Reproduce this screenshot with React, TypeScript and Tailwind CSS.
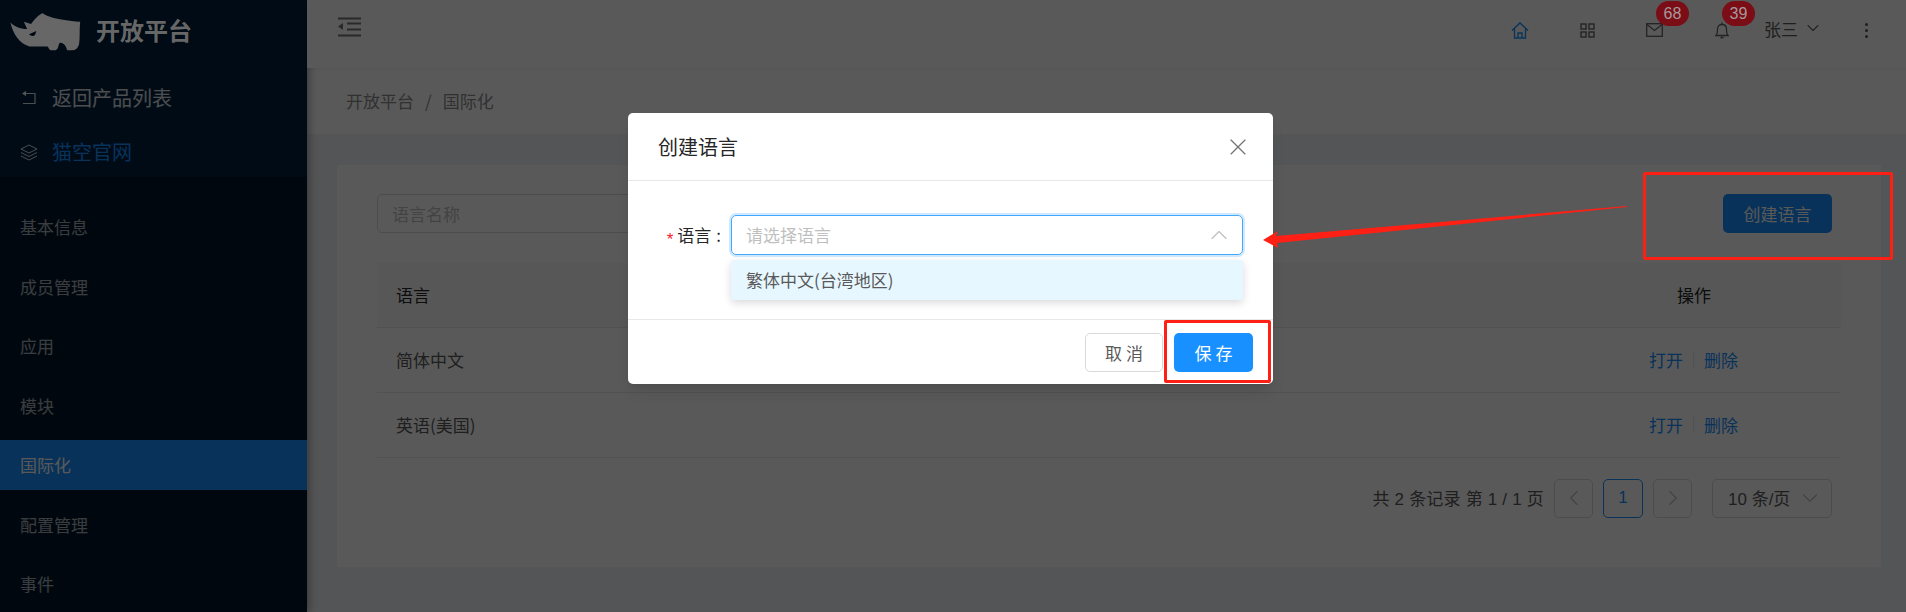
import { ChevronDown, ChevronLeft, ChevronRight, ChevronUp, X } from 'lucide-react'

const menuItems = ['基本信息', '成员管理', '应用', '模块', '国际化', '配置管理', '事件']

const rows = ['简体中文', '英语(美国)']

function RhinoLogo() {
  return (
    <svg width="74" height="40" viewBox="20 15 225 122" className="shrink-0">
      <path
        fill="currentColor"
        d="M27 50 C40 62 55 70 78 70 L68 48 L90 55 C100 40 115 25 125 22 C140 32 165 42 240 48 C237 70 240 100 236 118 C232 130 225 135 215 135 L200 135 C195 115 185 112 178 112 C172 118 175 130 165 135 L150 135 C143 132 145 126 140 123 L85 123 C55 115 35 85 27 50 Z"
      />
      <path fill="#00070e" d="M84 86 L106 76 L102 88 C96 93 90 92 84 86 Z" />
    </svg>
  )
}

function Sidebar() {
  return (
    <aside className="relative w-[307px] h-full shrink-0 bg-[#001529] shadow-[2px_0_8px_rgba(0,0,0,0.35)]">
      <div className="h-[177px] bg-[#002140] pt-[11px]">
        <div className="relative z-30 flex items-center h-[40px] pl-[8px] text-[#676767]">
          <RhinoLogo />
          <span className="ml-[14px] mb-[2px] text-[24px] font-bold leading-none">开放平台</span>
        </div>
        <div className="flex items-center mt-[27px] h-[40px] pl-[22px] text-white/85">
          <svg width="14" height="14" viewBox="0 0 14 14" fill="none" stroke="currentColor" strokeWidth="1.2">
            <path d="M1 2.5 H13 V12.5 H1" />
            <path d="M4 0.5 L1 2.5 L4 4.5" fill="currentColor" />
          </svg>
          <span className="ml-[16px] text-[20px]">返回产品列表</span>
        </div>
        <div className="flex items-center mt-[14px] h-[40px] pl-[20px] text-white/85">
          <svg width="18" height="17" viewBox="0 0 18 17" fill="none" stroke="currentColor" strokeWidth="1">
            <path d="M9 1 L17 5 L9 9 L1 5 Z" />
            <path d="M1 8.5 L9 12.5 L17 8.5" />
            <path d="M1 12 L9 16 L17 12" />
          </svg>
          <span className="ml-[14px] text-[20px] text-[#1890ff]">猫空官网</span>
        </div>
      </div>
      <nav className="pt-[25px] flex flex-col gap-[9.5px]">
        {menuItems.map((item) => (
          <div
            key={item}
            className={`h-[50px] flex items-center pl-[20px] text-[17px] ${
              item === '国际化' ? 'bg-[#1890ff] text-white' : 'text-white/65'
            }`}
          >
            {item}
          </div>
        ))}
      </nav>
    </aside>
  )
}

function Badge({ value, className }: { value: string; className: string }) {
  return (
    <span
      className={`absolute z-30 w-[33px] h-[25px] rounded-full bg-[#7a0d16] text-[#a8989a] font-['Liberation_Sans',sans-serif] text-[16px] leading-[25px] text-center ${className}`}
    >
      {value}
    </span>
  )
}

function TopBar() {
  return (
    <header className="relative h-[68px] shrink-0 bg-white flex items-start shadow-[0_1px_4px_rgba(0,21,41,0.08)]">
      <svg width="24" height="20" viewBox="0 0 24 20" className="ml-[31px] mt-[17px] text-[#777]" fill="none" stroke="currentColor" strokeWidth="1.8">
        <path d="M0 1.5 H23 M9 6.5 H23 M9 12.5 H23 M0 18.5 H23" />
        <path d="M5 6 L0 9.5 L5 13 Z" fill="currentColor" stroke="none" />
      </svg>
      <div className="ml-auto mr-[38px] mt-[20px] h-[20px] flex items-center text-[#666]">
        <svg width="18" height="17" viewBox="0 0 18 17" fill="none" stroke="#1890ff" strokeWidth="1.3">
          <path d="M1 8.5 L9 1 L17 8.5" />
          <path d="M3.5 7 V16 H14.5 V7" />
          <path d="M7 16 V11 H11 V16" />
        </svg>
        <svg width="15" height="15" viewBox="0 0 15 15" fill="none" stroke="currentColor" strokeWidth="1.4" className="ml-[51px]">
          <rect x="1" y="1" width="5" height="5" />
          <rect x="9" y="1" width="5" height="5" />
          <rect x="1" y="9" width="5" height="5" />
          <rect x="9" y="9" width="5" height="5" />
        </svg>
        <div className="relative ml-[51px]">
          <svg width="17" height="14" viewBox="0 0 17 14" fill="none" stroke="currentColor" strokeWidth="1.3" className="block">
            <rect x="0.7" y="0.7" width="15.6" height="12.6" />
            <path d="M1 1.5 L8.5 7.5 L16 1.5" />
          </svg>
          <Badge value="68" className="left-[10px] top-[-22px]" />
        </div>
        <div className="relative ml-[52px]">
          <svg width="14" height="17" viewBox="0 0 14 17" fill="none" stroke="currentColor" strokeWidth="1.3" className="block">
            <path d="M1 13.5 C2.5 12 2.5 10 2.5 7 C2.5 4 4.5 2.5 7 2.5 C9.5 2.5 11.5 4 11.5 7 C11.5 10 11.5 12 13 13.5 Z" />
            <path d="M7 0.5 V2.5" />
            <path d="M5.5 15.5 H8.5" strokeWidth="1.8" />
          </svg>
          <Badge value="39" className="left-[7px] top-[-21px]" />
        </div>
        <span className="ml-[35px] mb-[3px] text-[17px] text-[#595959] leading-none">张三</span>
        <ChevronDown size={20} strokeWidth={1.3} className="ml-[5px] mb-[4px]" />
        <div className="ml-[42px] flex flex-col gap-[3px]">
          <i className="block w-[3px] h-[3px] bg-[#555] rounded-full" />
          <i className="block w-[3px] h-[3px] bg-[#555] rounded-full" />
          <i className="block w-[3px] h-[3px] bg-[#555] rounded-full" />
        </div>
      </div>
    </header>
  )
}

function LanguageCard() {
  return (
    <section className="ml-[30px] mr-[25px] mt-[31px] h-[402px] bg-white px-[40px] pt-[29px]">
      <div className="flex justify-between pr-[9px]">
        <div className="w-[400px] h-[39px] border border-[#d9d9d9] rounded-[5px] pl-[14px] flex items-center text-[17px] text-[#bfbfbf]">
          语言名称
        </div>
        <button className="w-[109px] h-[39px] bg-[#1890ff] rounded-[5px] text-white text-[17px]">创建语言</button>
      </div>
      <table className="w-full mt-[30px] text-[17px] text-[#595959] border-collapse">
        <thead>
          <tr className="h-[64px] bg-[#fafafa] border-b border-[#e8e8e8] text-[#262626]">
            <th className="pl-[19px] text-left font-normal">语言</th>
            <th className="w-[164px] text-left font-normal">操作</th>
          </tr>
        </thead>
        <tbody>
          {rows.map((row) => (
            <tr key={row} className="h-[65px] border-b border-[#e8e8e8]">
              <td className="pl-[19px]">{row}</td>
              <td className="text-[#1890ff]">
                <div className="flex items-center ml-[-28px]">
                  <span>打开</span>
                  <i className="block w-px h-[17px] bg-[#e8e8e8] mx-[10px]" />
                  <span>删除</span>
                </div>
              </td>
            </tr>
          ))}
        </tbody>
      </table>
      <div className="flex items-center justify-end mt-[21px] pr-[9px] text-[17px] text-[#595959]">
        <span className="mr-[10px] pt-[4px] tracking-[0.2px] font-['Liberation_Sans','Noto_Sans_CJK_SC',sans-serif]">共 2 条记录 第 1 / 1 页</span>
        <div className="w-[39px] h-[39px] border border-[#d9d9d9] rounded-[5px] flex items-center justify-center text-[#bfbfbf]">
          <ChevronLeft size={26} strokeWidth={1} />
        </div>
        <div className="w-[40px] h-[39px] ml-[10px] border border-[#1890ff] rounded-[5px] flex items-center justify-center text-[#1890ff] font-['Liberation_Sans',sans-serif]">1</div>
        <div className="w-[39px] h-[39px] ml-[10px] border border-[#d9d9d9] rounded-[5px] flex items-center justify-center text-[#bfbfbf]">
          <ChevronRight size={26} strokeWidth={1} />
        </div>
        <div className="w-[120px] h-[39px] ml-[20px] border border-[#d9d9d9] rounded-[5px] flex items-center pl-[15px]">
          <span className="pt-[4px] font-['Liberation_Sans','Noto_Sans_CJK_SC',sans-serif]">10 条/页</span>
          <ChevronDown size={26} strokeWidth={1} className="ml-[7px] text-[#bfbfbf]" />
        </div>
      </div>
    </section>
  )
}

function CreateLanguageModal() {
  return (
    <div className="absolute left-[628px] top-[113px] w-[645px] h-[271px] bg-white rounded-[5px] shadow-lg flex flex-col">
      <div className="h-[68px] shrink-0 border-b border-[#e8e8e8] flex items-center justify-between pl-[30px] pr-[21px]">
        <span className="text-[20px] text-[#262626]">创建语言</span>
        <X size={28} strokeWidth={1} className="text-[#737373]" />
      </div>
      <div className="flex-1 relative">
        <div className="flex pt-[34px]">
          <div className="w-[103px] shrink-0 h-[40px] flex items-center justify-end pr-[10px] text-[17px] text-[#262626]">
            <span className="text-[#f5222d] mr-[4px] mt-[10px] font-['Liberation_Sans',sans-serif]">*</span>
            语言<span className="ml-[5px]">:</span>
          </div>
          <div className="w-[512px] h-[40px] border border-[#40a9ff] rounded-[5px] shadow-[0_0_0_2px_rgba(24,144,255,0.2)] flex items-center justify-between pl-[14px] pr-[9px] text-[17px] text-[#bfbfbf]">
            请选择语言
            <ChevronUp size={28} strokeWidth={1} />
          </div>
        </div>
        {/* open dropdown */}
        <div className="absolute left-[103px] top-[79px] w-[512px] h-[40px] bg-[#e6f7ff] rounded-[3px] shadow-[0_3px_8px_rgba(0,0,0,0.15)] flex items-center pl-[15px] text-[17px] text-[#595959]">
          繁体中文(台湾地区)
        </div>
      </div>
      <div className="h-[65px] shrink-0 border-t border-[#e8e8e8] flex justify-end items-start pt-[13px] pr-[20px]">
        <button className="w-[78px] h-[39px] border border-[#d9d9d9] rounded-[5px] text-[17px] text-[#595959]">取 消</button>
        <button className="w-[79px] h-[39px] ml-[11px] bg-[#1890ff] rounded-[5px] text-[17px] text-white">保 存</button>
      </div>
    </div>
  )
}

export default function App() {
  return (
    <div className="relative flex w-[1906px] h-[612px] overflow-hidden bg-[#f0f2f5] font-['Noto_Sans_CJK_SC','Noto_Sans',sans-serif]">
      <Sidebar />
      <main className="flex-1 flex flex-col min-w-0">
        <TopBar />
        <div className="h-[66px] shrink-0 bg-white flex items-center pl-[39px] text-[17px] text-[#8c8c8c]">
          <span>开放平台</span>
          <span className="mx-[11px]">/</span>
          <span>国际化</span>
        </div>
        <LanguageCard />
      </main>

      {/* dimmed mask */}
      <div className="absolute inset-0 z-20 bg-black/65" />

      <div className="absolute inset-0 z-30 pointer-events-none">
        <CreateLanguageModal />
        {/* annotation marks */}
        <div className="absolute left-[1643px] top-[172px] w-[250px] h-[88px] border-[3px] border-[#ff2015] rounded-[2px]" />
        <div className="absolute left-[1164px] top-[320px] w-[107px] h-[63px] border-[3px] border-[#ff2015] rounded-[2px]" />
        <svg width="1906" height="612" className="absolute left-0 top-0">
          <polygon fill="#ff2015" points="1263,240 1278,231 1276,236 1627,206 1627,207 1277,243 1278,248" />
        </svg>
      </div>
    </div>
  )
}
